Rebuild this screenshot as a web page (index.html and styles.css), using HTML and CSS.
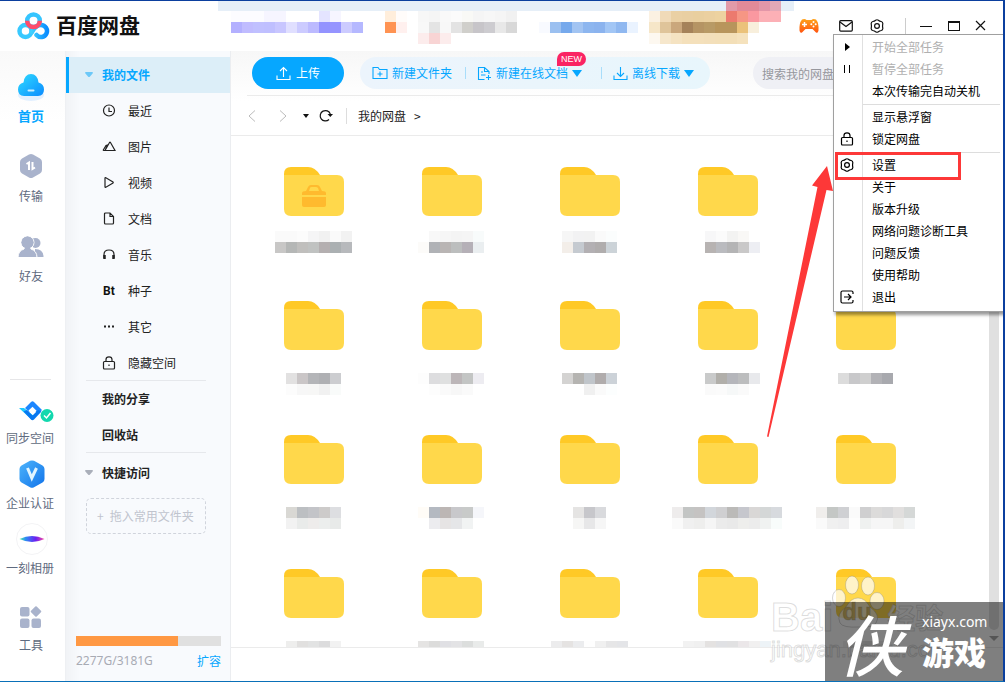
FILE: index.html
```html
<!DOCTYPE html>
<html lang="zh-CN">
<head>
<meta charset="utf-8">
<title>百度网盘</title>
<link rel="stylesheet" href="styles.css">
</head>
<body>
<svg width="0" height="0" class="defs" aria-hidden="true">
  <defs>
    <linearGradient id="cloudFill" x1="0" y1="0" x2="1" y2="1"><stop offset="0" stop-color="#2fdcff"/><stop offset="1" stop-color="#0b8cff"/></linearGradient>
    <linearGradient id="hexFill" x1="0" y1="0" x2="1" y2="1"><stop offset="0" stop-color="#4db4fb"/><stop offset="1" stop-color="#1173ea"/></linearGradient>
    <linearGradient id="lensFill"><stop offset="0" stop-color="#4ff0a0"/><stop offset=".25" stop-color="#2d8cf5"/><stop offset=".65" stop-color="#6a1ff0"/><stop offset="1" stop-color="#ff4fa0"/></linearGradient>
    <linearGradient id="padFill" x1="0" y1="0" x2="0" y2="1"><stop offset="0" stop-color="#ffa21a"/><stop offset="1" stop-color="#ff5410"/></linearGradient>
    <linearGradient id="logoFill"><stop offset="0" stop-color="#3fd0ff"/><stop offset="1" stop-color="#0a8dff"/></linearGradient>
    <symbol id="gear" viewBox="0 0 14 14"><path d="M5.600 1.200Q7 .3 8.400 1.200Q9.500 2.200 11.200 2.500Q12.900 3 12.800 4.800Q12.300 7 12.800 9.200Q12.900 11 11.200 11.500Q9.500 11.800 8.400 12.800Q7 13.700 5.600 12.800Q4.500 11.800 2.800 11.500Q1.100 11 1.200 9.200Q1.700 7 1.200 4.800Q1.100 3 2.800 2.500Q4.500 2.200 5.600 1.200Z"/><circle cx="7" cy="7" r="2.400"/></symbol>
    <symbol id="lock" viewBox="0 0 14 14"><rect x="1.500" y="5.500" width="11" height="7.500" rx="1"/><path d="M4 5.500V3.600Q4 .8 7 .8T10 3.600V5.500M7 8.500v1.500"/></symbol>
    <symbol id="folder" viewBox="0 0 60 50"><path fill="#ffc926" d="M0 12V7Q0 0 7 0H24Q31 0 36 8L42 20H0Z"/><path fill="#ffd84b" d="M0 8H53Q60 8 60 15V42Q60 49 53 49H7Q0 49 0 42Z"/></symbol>
  </defs>
</svg>

<div class="window">
  <header class="header">
    <a class="logo" href="#">
      <svg width="34" height="28" viewBox="0 0 34 28" fill="none" stroke-width="4.500"><circle cx="9.500" cy="19" r="6" stroke="#38c9ff"/><path d="M16 20Q19.500 13 25 13A6 6 0 1 1 20.500 23" stroke="url(#logoFill)" stroke-linecap="round"/><circle cx="17.500" cy="8.800" r="6.300" stroke="#35c5ff"/><path d="M11.200 8.800A6.300 6.300 0 0 0 23.800 8.800" stroke="#ff4c6b"/></svg>
      <span>百度网盘</span>
    </a>
    <svg class="notice" width="576" height="44" viewBox="218 0 576 44" shape-rendering="crispEdges" aria-hidden="true">
      <rect x="218" width="576" height="11" fill="#e6eff8"/>
      <g id="notice-cells"></g>
    </svg>
    <div class="window-tools">
      <button class="icon-btn pad" aria-label="游戏"><svg width="20" height="16" viewBox="0 0 20 16"><path fill="url(#padFill)" d="M3 1.500Q6 .5 7.500 2H12.500Q14 .5 17 1.500Q20 5 19.500 12.500Q19 15.500 17 14.500L13.500 11H6.500L3 14.500Q1 15.500.5 12.500Q0 5 3 1.500Z"/><path stroke="#fff" stroke-width="1.500" d="M5.500 4V9M3 6.500H8"/><g fill="#fff"><circle cx="14.500" cy="4" r="1"/><circle cx="14.500" cy="8.500" r="1"/><circle cx="12.300" cy="6.300" r="1"/><circle cx="16.700" cy="6.300" r="1"/></g></svg></button>
      <button class="icon-btn mail" aria-label="消息"><svg width="14" height="12" viewBox="0 0 14 12"><rect x=".7" y=".7" width="12.600" height="10.400" rx="1"/><path d="M1 2L7 6.500L13 2"/></svg></button>
      <button class="icon-btn gear" aria-label="菜单"><svg width="14" height="14"><use href="#gear"/></svg></button>
      <span class="tool-line"></span>
      <button class="icon-btn min" aria-label="最小化"><svg width="12" height="12" viewBox="0 0 12 12" shape-rendering="crispEdges"><path d="M0 6.500H12"/></svg></button>
      <button class="icon-btn max" aria-label="最大化"><svg width="12" height="10" viewBox="0 0 12 10" shape-rendering="crispEdges"><path d="M.5 1V9.500H11.500V1"/><path stroke-width="2" d="M0 1H12"/></svg></button>
      <button class="icon-btn close" aria-label="关闭"><svg width="11" height="11" viewBox="0 0 11 11"><path d="M1 1L10 10M10 1L1 10"/></svg></button>
    </div>
  </header>

  <div class="body">
    <nav class="rail" aria-label="主导航">
      <a class="rail-item current" href="#"><svg width="34" height="38" viewBox="0 0 34 38"><ellipse cx="17" cy="27" rx="13" ry="6" fill="#e2f0ff"/><path fill="url(#cloudFill)" d="M10 28Q4 27.500 4 21.500Q4 16 9.500 14.500Q10.500 6 17 6T24.500 14.500Q30 16 30 21.500Q30 27.500 24 28Z"/><path stroke="#c8eeff" stroke-width="2" stroke-linecap="round" d="M14.500 22.500H19.500"/></svg><span>首页</span></a>
      <a class="rail-item" href="#"><svg width="24" height="26" viewBox="0 0 24 26"><path fill="#a9b3cc" d="M10 1.600Q12 .4 14 1.600L21 5.500Q23 6.600 23 9V17Q23 19.400 21 20.500L14 24.400Q12 25.600 10 24.400L3 20.500Q1 19.400 1 17V9Q1 6.600 3 5.500Z"/><path fill="none" stroke="#fff" stroke-width="2" d="M7.500 11L10 9.500V17M13.500 9V16L16 14.500"/></svg><span>传输</span></a>
      <a class="rail-item" href="#"><svg width="26" height="26" viewBox="0 -2 26 26" fill="#a9b3cc"><circle cx="17.500" cy="8" r="5"/><path d="M17 14Q25.500 14 25.500 22H17Z"/><circle cx="9.500" cy="7.500" r="6.500" stroke="#fff"/><path stroke="#fff" d="M0 22.500Q0 16 6 14Q6.500 12.500 6.500 12H12.500Q12.500 12.500 13 14Q19 16 19 22.500Z"/><circle cx="9.500" cy="7.500" r="6"/></svg><span>好友</span></a>
      <div class="rail-extra">
        <a class="rail-item sync" href="#"><svg width="36" height="26" viewBox="0 0 36 26"><path fill="#1cc8ff" d="M1 9H6L16 17L14 21Z"/><path fill="#1c86ff" d="M7 9L13 3Q14.500 1.500 16 3L24 11L20 15L14.500 9.500L11 13Z"/><path fill="#0878f0" d="M9 11L14.500 16.500L20 11L23.500 12.500L16 20.500Q14.500 22 13 20.500L5.500 12.500Z"/><path fill="#fff" d="M10.500 11.500L14.500 7.800L18.500 11.800L14.500 15.800Z"/><circle cx="29" cy="16.500" r="6.500" fill="#12d8ae"/><path stroke="#fff" stroke-width="1.500" fill="none" d="M26 16.500L28.500 19L32.500 14"/></svg><span>同步空间</span></a>
        <a class="rail-item auth" href="#"><svg width="26" height="28" viewBox="0 0 26 28"><path fill="url(#hexFill)" d="M11 .8Q13 0 15 .8L23.500 5.500Q25.500 6.500 25.500 9V19Q25.500 21.500 23.500 22.500L15 27.200Q13 28.200 11 27.200L2.500 22.500Q.5 21.500.5 19V9Q.5 6.500 2.500 5.500Z"/><path fill="none" stroke="#e0f4ff" stroke-width="3" d="M8.500 8L12.800 18L17.500 8"/></svg><span>企业认证</span></a>
        <a class="rail-item album" href="#"><svg width="32" height="32" viewBox="0 0 32 32"><circle cx="16" cy="16" r="15.500" fill="#fff" stroke="#f3f3f5"/><path fill="url(#lensFill)" d="M3.500 16Q16 10 28.500 16Q16 22 3.500 16Z"/></svg><span>一刻相册</span></a>
        <a class="rail-item last" href="#"><svg width="22" height="22" viewBox="0 0 22 22" fill="#a9b3cc"><rect y="1" width="9.500" height="9.500" rx="2"/><rect y="12.500" width="9.500" height="9.500" rx="2"/><rect x="11.500" y="12.500" width="9.500" height="9.500" rx="2"/><rect x="12" y="1.500" width="8" height="8" rx="1" transform="rotate(45 16 5.500)"/></svg><span>工具</span></a>
      </div>
    </nav>

    <aside class="side">
      <a class="side-item root active" href="#"><svg class="caret" width="8" height="6" viewBox="0 0 8 6"><path fill="#6cc8f8" d="M0 1Q0 0 1 0H7Q8 0 8 1L5 4.500Q4 5.500 3 4.500Z"/></svg><b>我的文件</b><svg class="more" width="3" height="12" viewBox="0 0 3 12" fill="#7fcdf8"><path d="M0 0H2V2H0ZM0 4.500H2V6.500H0ZM0 9H2V11H0Z"/></svg></a>
      <a class="side-item" href="#"><svg width="14" height="14"><circle cx="7" cy="6.500" r="5.500"/><path d="M7 3.500V7.500H10"/></svg>最近</a>
      <a class="side-item" href="#"><svg width="14" height="14"><path d="M1 10.500L4 5.500L5.500 5L3 10.500M3 10.500L7.500 2.500Q8 2 8.500 2.500L13 10.500ZM1 10.500H4"/></svg>图片</a>
      <a class="side-item" href="#"><svg width="14" height="14"><path d="M3.500 1.500Q3 1.500 3 2V11Q3 11.500 3.500 11.500L11 7Q11.500 6.500 11 6Z"/></svg>视频</a>
      <a class="side-item" href="#"><svg width="14" height="14"><path d="M8 1H3.500Q2.500 1 2.500 2V11Q2.500 12 3.500 12H10.500Q11.500 12 11.500 11V4.500ZM8 1V4.500H11.500"/></svg>文档</a>
      <a class="side-item" href="#"><svg width="14" height="14"><path d="M2 10V6.500Q2 2 7 2T12 6.500V10"/><path stroke-width="2.500" d="M2.500 7V11M11.500 7V11"/></svg>音乐</a>
      <a class="side-item" href="#"><b class="bt">Bt</b>种子</a>
      <a class="side-item" href="#"><svg width="14" height="14"><path stroke-width="2" d="M2 6.500H4M6 6.500H8M10 6.500H12"/></svg>其它</a>
      <a class="side-item" href="#"><svg width="14" height="14"><use href="#lock"/></svg>隐藏空间</a>
      <a class="side-item root ruled" href="#"><b>我的分享</b></a>
      <a class="side-item root" href="#"><b>回收站</b></a>
      <a class="side-item root quick ruled" href="#"><svg class="caret" width="8" height="6" viewBox="0 0 8 6"><path fill="#aaafba" d="M0 1Q0 0 1 0H7Q8 0 8 1L5 4.500Q4 5.500 3 4.500Z"/></svg><b>快捷访问</b></a>
      <div class="drop"><span>+</span>拖入常用文件夹</div>
      <div class="quota">
        <div class="quota-bar"><span style="width:70.400%"></span></div>
        <div class="quota-row"><span>2277G/3181G</span><a href="#">扩容</a></div>
      </div>
    </aside>

    <main class="main">
      <div class="toolbar">
        <button class="upload"><svg width="15" height="15" viewBox="0 0 15 15"><path d="M7.500 11V1.500M4 5L7.500 1.500L11 5M1 9.500V13.500H14V9.500"/></svg>上传</button>
        <div class="pill">
          <button><svg width="16" height="14" viewBox="0 0 16 14"><path d="M1 12.500V1.500H6L7.500 3.500H15V12.500ZM8 5.500V10.500M5.500 8H10.500"/></svg>新建文件夹</button>
          <button><svg width="15" height="15" viewBox="0 0 15 15"><path d="M7.500 13.500H1.500V1.500H7.500L12 5.500V8M7.500 1.500V5.500H12M4 6H6M4 9H8.500M11.500 9V14M9 11.500H14"/></svg>新建在线文档<i class="down"></i><em class="new">NEW</em></button>
          <button><svg width="15" height="15" viewBox="0 0 15 15"><path d="M7.500 1V10.500M4 7L7.500 10.500L11 7M1 9.500V13.500H14V9.500"/></svg>离线下载<i class="down"></i></button>
        </div>
        <input class="search" type="text" placeholder="搜索我的网盘文件" aria-label="搜索我的网盘文件">
      </div>
      <div class="crumbs">
        <button aria-label="后退"><svg width="8" height="12" viewBox="0 0 8 12" stroke="#bbb"><path d="M7 .5L1 6L7 11.500"/></svg></button>
        <button aria-label="前进"><svg width="8" height="12" viewBox="0 0 8 12" stroke="#bbb"><path d="M1 .5L7 6L1 11.500"/></svg></button>
        <button aria-label="历史"><svg width="6" height="4" viewBox="0 0 6 4"><path fill="#111" d="M0 0H6L3 4Z"/></svg></button>
        <button aria-label="刷新"><svg width="14" height="13" viewBox="0 0 14 13" stroke="#111" stroke-width="1.200"><path d="M10 10.500A5.200 5.200 0 1 1 11.300 5"/><path fill="#111" stroke="none" d="M8.500 5H14L11.300 8Z"/></svg></button>
        <a href="#">我的网盘</a><span>&gt;</span>
      </div>
      <div class="files">
        <div class="grid" id="grid"></div>
        <div class="scroll"><span class="thumb"></span><i></i></div>
      </div>
      <footer class="status"></footer>
    </main>
  </div>

  <ul class="menu">
    <li><button disabled><span class="ico"><svg width="14" height="14"><path fill="#000" stroke="none" d="M5 3L10 7L5 11Z"/></svg></span>开始全部任务</button></li>
    <li><button disabled><span class="ico"><svg width="14" height="14" shape-rendering="crispEdges"><path d="M4.500 3V11M9.500 3V11"/></svg></span>暂停全部任务</button></li>
    <li><button><span class="ico"></span>本次传输完自动关机</button></li>
    <li class="sep"><button><span class="ico"></span>显示悬浮窗</button></li>
    <li><button><span class="ico"><svg width="14" height="14"><use href="#lock"/></svg></span>锁定网盘</button></li>
    <li class="sep"><button><span class="ico"><svg width="14" height="14"><use href="#gear"/></svg></span>设置</button></li>
    <li><button><span class="ico"></span>关于</button></li>
    <li><button><span class="ico"></span>版本升级</button></li>
    <li><button><span class="ico"></span>网络问题诊断工具</button></li>
    <li><button><span class="ico"></span>问题反馈</button></li>
    <li><button><span class="ico"></span>使用帮助</button></li>
    <li><button><span class="ico"><svg width="14" height="14"><path d="M13 4V2.500Q13 1 11.500 1H2.500Q1 1 1 2.500V11.500Q1 13 2.500 13H11.500Q13 13 13 11.500V10M4 7H11M8 4L11 7L8 10"/></svg></span>退出</button></li>
  </ul>

  <svg class="arrow" width="70" height="274" viewBox="765 164 70 274" aria-hidden="true"><path fill="#fd3838" d="M827 166L812 185.500L817.500 187L767 436.500L768.500 437L826.500 190L833 191Z"/></svg>
  <div class="mark"></div>

  <div class="paw-mark" aria-hidden="true">
    <div class="paw-row"><span>Bai</span><div class="paw"><svg width="56" height="62" viewBox="0 0 56 62" fill="#fff" fill-opacity=".7" stroke="#888" stroke-opacity=".35"><ellipse cx="8" cy="32" rx="6.500" ry="8.500"/><ellipse cx="21" cy="19" rx="6.500" ry="9"/><ellipse cx="37" cy="20" rx="6.500" ry="9"/><ellipse cx="46" cy="35" rx="7" ry="8.500"/><path d="M27 32Q34 32 39 41Q50 49 45 57Q41 62 28 61Q12 62 9 57Q5 48 15 41Q20 32 27 32Z"/></svg><b>du</b></div><span class="jy">经验</span></div>
    <div class="paw-url">jingyan.baidu.com</div>
  </div>
  <div class="stamp"><span class="stamp-big">侠</span><div><span class="stamp-url">xiayx.com</span><b>游戏</b></div></div>
</div>
<script src="script.js"></script>
</body>
</html>
```
FILE: styles.css
```css
* { box-sizing: border-box; }
body { margin: 0; font: 12px/20px "Noto Sans CJK SC", sans-serif; color: #222; background: #fff; }
a { color: inherit; text-decoration: none; }
button { font: inherit; color: inherit; background: none; border: 0; padding: 0; white-space: nowrap; }
svg { display: block; flex: none; }
.defs { position: absolute; }

.window { position: relative; display: flex; flex-direction: column; height: 100vh; min-height: 640px; overflow: hidden; border: solid #0b3f9e; border-width: 1px 2px 1px 0; border-bottom-color: #0a70b8; }

/* header */
.header { display: flex; align-items: flex-start; height: 50px; flex: none; }
.logo { display: flex; align-items: center; width: 218px; height: 50px; padding-left: 16px; gap: 6px; font-size: 21px; font-weight: 700; color: #111; }
.logo span { padding-bottom: 4px; }
.notice { margin-top: -1px; }
.window-tools { display: flex; align-items: center; flex: 1; height: 49px; padding-left: 5px; }
.icon-btn svg { fill: none; stroke: #111; stroke-width: 1.2; }
.pad svg { stroke: none; }
.mail { margin-left: 20px; }
.gear { margin-left: 17px; }
.tool-line { width: 1px; height: 16px; margin-left: 21px; background: #ccc; }
.min { margin-left: 14px; }
.max { margin-left: 16px; }
.close { margin-left: 15px; }

.body { display: flex; flex: 1; min-height: 0; }

/* left rail */
.rail { display: flex; flex-direction: column; width: 65px; flex: none; padding-top: 15px; background: linear-gradient(#f9f9f9, #fff 70px); color: #5f6b80; }
.rail-item { display: flex; flex-direction: column; align-items: center; width: 62px; height: 80px; line-height: 20px; }
.rail-item span { margin-top: auto; margin-bottom: 20px; }
.rail-item svg { margin-top: 7px; }
.rail-item.current { color: #06a7ff; font-size: 13px; font-weight: 700; }
.rail-item.current svg { margin-top: 2px; }
.rail-extra { margin-top: auto; padding-bottom: 26px; }
.rail-extra::before { content: ""; display: block; width: 41px; margin: 0 0 17px 10px; border-top: 1px solid #e6e6e8; }
.rail-extra .rail-item { height: 65px; width: 60px; }
.rail-extra .rail-item span { margin-bottom: 0; }
.rail-extra .sync { height: 51px; }
.rail-extra .sync svg { margin: 2px 0 0 12px; }
.rail-extra .auth svg { margin: 12px 0 0 4px; }
.rail-extra .album svg { margin: 10px 0 0 4px; }
.rail-extra .last { height: 77px; width: 62px; }
.rail-extra .last svg { margin-top: 28px; }

/* side list */
.side { display: flex; flex-direction: column; width: 166px; flex: none; padding: 6px 0 10px; border-left: 1px solid #eef0f3; border-right: 1px solid #ebedf0; background: linear-gradient(90deg, #f1f3f6, #f8fafd 14px); }
.side-item { display: flex; align-items: center; height: 36px; flex: none; padding-left: 36px; gap: 12px; }
.side-item svg { fill: none; stroke: #222; stroke-width: 1.2; }
.side-item .caret, .side-item .more { stroke: none; }
.side-item .more { margin: 0 29px 0 auto; }
.root { position: relative; }
.root .caret { margin: 0 -3px 0 -17px; }
.active { color: #06a7ff; background: #dceef8; border-left: 3px solid #06a7ff; padding-left: 33px; }
.bt { width: 14px; padding-left: 1px; font-family: Roboto, sans-serif; font-size: 12px; color: #111; }
.ruled::before { content: ""; position: absolute; top: -1px; left: 20px; width: 120px; border-top: 1px solid #e6e8ec; }
.quick { margin-top: 2px; }
.quick::before { top: -3px; }
.drop { width: 120px; height: 36px; flex: none; margin: 7px 0 0 20px; padding-left: 10px; border: 1px dashed #d0d4dc; border-radius: 5px; line-height: 34px; color: #c0c4ce; white-space: nowrap; }
.drop span { margin-right: 6px; }
.quota { margin: auto 9px 0 10px; }
.quota-bar { height: 10px; background: #e0e0e0; }
.quota-bar span { display: block; height: 10px; background: #ff9843; }
.quota-row { display: flex; justify-content: space-between; margin-top: 5px; color: #a8abb4; }
.quota-row span { font-family: "Noto Sans", sans-serif; }
.quota-row a { color: #06a7ff; }

/* main pane */
.main { display: flex; flex-direction: column; flex: 1; min-width: 0; background: linear-gradient(#f7f7f7, #fff 50px); }
.toolbar { display: flex; align-items: center; height: 45px; flex: none; margin-left: 16px; padding-left: 5px; border-bottom: 1px solid #ebebeb; }
.toolbar svg { fill: none; stroke: currentColor; stroke-width: 1.1; }
.upload { display: flex; align-items: center; justify-content: center; gap: 5px; width: 92px; height: 32px; flex: none; border-radius: 16px; background: #06a7ff; color: #fff; }
.pill { display: flex; align-items: center; width: 350px; height: 32px; flex: none; margin-left: 16px; padding-left: 12px; border-radius: 16px; background: linear-gradient(90deg, #ecf4fc, #e8f6fc); color: #06a7ff; }
.pill button { position: relative; display: flex; align-items: center; gap: 4px; }
.pill button + button { margin-left: 13px; padding-left: 12px; }
.pill button + button::before { content: ""; position: absolute; left: 0; width: 1px; height: 12px; background: #a8ddfa; }
.pill button:last-child { margin-left: 19px; }
.down { border: 5px solid transparent; border-top: 7px solid #06a7ff; border-bottom: 0; }
.new { position: absolute; right: -4px; top: -11px; padding: 0 4px; border-radius: 7px 7px 7px 0; background: #fa2463; color: #fff; font: 9px/14px "Liberation Sans", sans-serif; }
.search { flex: 1; min-width: 80px; height: 32px; margin: 0 14px 0 43px; padding: 0 9px; border: 0; border-radius: 16px; background: #eff0f5; font: inherit; }
.search::placeholder { color: #96979d; }
.crumbs { display: flex; align-items: center; height: 40px; flex: none; padding-left: 17px; border-bottom: 1px solid #ebebeb; }
.crumbs svg { fill: none; }
.crumbs button + button { margin-left: 23px; }
.crumbs button:nth-child(3) { margin-left: 16px; }
.crumbs button:nth-child(4) { margin-left: 10px; }
.crumbs a { margin-left: 13px; padding-left: 11px; border-left: 1px solid #ddd; line-height: 16px; }
.crumbs span { margin-left: 8px; }
.files { display: flex; flex: 1; min-height: 0; overflow: hidden; }
.grid { display: grid; flex: 1; grid-template-columns: repeat(auto-fill, 138px); grid-auto-rows: 134px; align-content: start; padding: 31px 0 0 14px; }
.file { display: flex; flex-direction: column; align-items: center; }
.cover { position: relative; }
.badge { position: absolute; left: 18px; top: 18px; }
.name { margin: 14px 2px 0 0; }
.low .name { margin-top: 22px; }
.scroll { display: flex; flex-direction: column; align-items: center; width: 10px; margin-right: 4px; }
.thumb { flex: 1; width: 10px; margin-bottom: 6px; border-radius: 0 0 5px 5px; background: #e0e0e0; }
.scroll i { margin-bottom: 6px; border: 5px solid transparent; border-top-color: #aaa; border-bottom: 0; }
.status { height: 34px; flex: none; border-top: 1px solid #ebebeb; }

/* popup menu */
.menu { position: absolute; top: 33px; right: -1px; width: 171px; margin: 0; padding: 1px 3px 3px 0; list-style: none; border: 1px solid #a0a0a0; background: linear-gradient(90deg, #fff 28px, #e0e0e0 28px, #e0e0e0 29px, #fff 29px); box-shadow: 2px 3px 3px rgba(0,0,0,.4); color: #000; }
.menu button { display: flex; align-items: center; width: 100%; height: 22px; }
.menu button:disabled { color: #b0b0b0; }
.ico { width: 30px; margin-right: 8px; padding-left: 6px; }
.ico svg { fill: none; stroke: #000; stroke-width: 1.2; }
.sep { padding-top: 4px; background: linear-gradient(#ddd, #ddd) 29px 2px / 100% 1px no-repeat; }

/* annotations and stamps lying over the window */
.arrow { position: absolute; left: 765px; top: 163px; }
.mark { position: absolute; right: 42px; top: 151px; width: 126px; height: 28px; border: 3px solid #fd3838; }
.paw-mark { position: absolute; right: 50px; bottom: 18px; width: 182px; color: rgba(255,255,255,.8); -webkit-text-stroke: 1px rgba(120,120,120,.25); }
.paw-row { display: flex; align-items: flex-end; height: 74px; font: 700 40px/40px "Liberation Sans", sans-serif; }
.paw { position: relative; padding-bottom: 9px; margin-left: -2px; }
.paw b { position: absolute; left: 11px; bottom: 12px; font-size: 24px; line-height: 26px; color: rgba(200,160,40,.6); }
.paw-row .jy { font: 700 28px/40px "Noto Sans CJK SC", sans-serif; white-space: nowrap; }
.paw-url { font: 22px/26px "Liberation Sans", sans-serif; }
.stamp { position: absolute; right: -2px; bottom: -1px; display: flex; align-items: center; width: 180px; height: 80px; padding-left: 13px; background: rgba(0,0,0,.5); color: #fff; }
.stamp-big { width: 84px; font: italic 500 66px/80px "Noto Sans CJK SC", sans-serif; }
.stamp div { display: flex; flex-direction: column; }
.stamp-url { font: 14px/18px "Noto Sans", sans-serif; }
.stamp b { font-size: 32px; line-height: 40px; font-weight: 900; }
```
FILE: script.js
```js
const CELL = 11;

function cells(x, y, list) {
  return list.split(" ").map((c, i) =>
    c === "-" ? "" : `<rect x="${x + i * CELL}" y="${y}" width="${CELL}" height="${CELL}" fill="#${c}"/>`
  ).join("");
}

document.getElementById("notice-cells").innerHTML = [
  [231, 11, "fcfcff fcfcff fcfcff f6f5ff f6f5ff - - - e4e4ff f6f5ff"],
  [231, 22, "b3b0ff c0bcff c0c0ff bfbfff c8c6ff e0dfff cccbff bcbaff 9393ff 9594ff cccbff b5b8ff"],
  [385, 11, "ffeedb fffcfa"],
  [385, 22, "ff9352 fff0ee"],
  [418, 11, "f7f7f7 f5f5f5 f9f9f9 fbfbfb f9f9f6 f5f5f5 f7f7f7 f5f5f5 f1f1f1"],
  [418, 22, "f8f8f8 e4e4e4 f8f8f8 e3e3e3 d0cfcb c7c5c9 cdccd0 e8e8e8 d8d8d8"],
  [418, 33, "fcecec f8d4d4 fcecec"],
  [539, 22, "f8faff 9bc0f0 76a9ec a2c4f2 8db6ef 8bb3ee a2c6f5 90b8f0 eaf3ff"],
  [649, 11, "fbf1e2 f0dab8 ead0a4 e9cfa2 e9cf9f ebd0a0 edd2a0 ec7a6e f69684 fa98a0 fcb0b6 fcb0b6"],
  [649, 22, "f6e6c8 dfc49a caa77c a5825a b59464 b89a66 b8955c b8955c ebc27a f8efdc"],
  [649, 33, "fdf8f0 f6e7cc f5e3c2 f4e0bb f4e0bb f3dfba f3dfb8 f3dfb8 f5e2bd"],
  [726, 0, "e29aa8 e28a98 e28a98 e296a8 e2a8b6"]
].map(r => cells(...r)).join("");

const names = [
  ["fafafa fafafa fcfcfc f5f5f6 f1f1f1 fafafa f2f2f2|c8c7c6 b5b7b6 c0bfbd c0c2c1 b4afb0 abb0b2 b7b9bc", "- f8f8f8 f6f6f6 f4f4f4 f5f5f5 f8fbfb|fcfbf9 b0b2b6 b9b5b4 bcbebe b5b0b7 eaeef0", "f6f6f6 f2f2f3 f2f2f2 fafafa fbfdfd|f3eee9 c5cad0 b3b0b3 b0adad ccd3d8", "- f7f7f8 fbfbfb f3f3f2 f9f8f6 -|- b7b3b2 babbbf b4b4b5 c9c8c8 edeef3", ""],
  ["e2e1e1 cac6c7 b4b5b8 afb0b3 cccdd0|fcfcfc f7f7f7 f7f7f6 f1f1f1 f9fbfa", "fdfdfd dddddf dfe0e0 bcb6b8 c3c5c4 edecf1|- fdfdfd fafafa f7f7f7 fafafa -", "d4d3d2 b5b4b1 c0c5ca b0acac ccd2d8|- - f0f0f0 fafafa fcfefe", "- c9caca b1afaa b5b6bb bcbdbe e8e9ec|- fafafa fbfbfb f6f8f8 fafafa -", "dcdcdc c8c8ca cfcfcf b2b2b6 a8a9ae"],
  ["d9d8d4 bcbfc2 c3c4c8 cdcbca dddee1|f2f2f2 e9ebea eeeceb eceeed e8eae9", "fffcf7 b4b9c1 bcb6b4 c8c8cb c8cac9 f5f6fa|- ececef e6e4e4 e5e6e8 f1f3f3 -", "e5e4e3 c7c7cb d9dadd|f6f6f5 e7e7e8 f6f6f6", "eeecec c3c5c4 c5c3c2 d2d6db cfcfd1 bbbab8 c6c7cd d9d7d6 d4d7d7 d7dade|fafafa f0f0f0 eeeeed f5f5f5 ebebeb e9e9e9 eeeeec ececec f0f2f1 f8fcfb", "f0eeec c4c7c5 cfd0d3 fafafa cfcfd0 dcdbda d8d8d9 e1dfde d5d8d7|fafafa f0f0f0 eeeeef fdfdfd eff1f0 f6f6f6 f6f6f6 eeeeec f3f5f6"],
  ["eeeeed e1e0df e2e3e3 dcdcdd f2f2f2", "e5e4e3 dcdcdb e0e0e4 e3e3e5 dcdedd e9ebea", "ececed e5e3e2 ebecee fefefe f0f0f0 e6e6e7 e4e5e8", "f2f2f2 f0f0f0 e4e2e1 e0e1e4 e1e1e2 ebe7e9 f1f0f0 edf3f7", "f2f2f2 e6e6e6 e2e2e2 eeeeee"]
];

const briefcase = '<svg class="badge" width="24" height="22" viewBox="0 0 24 22" fill="#ffba2e"><path fill-rule="evenodd" d="M4 6L6 2Q7 0 9 0H15Q17 0 18 2L20 6Q24 6 24 8V10H0V8Q0 6 4 6ZM7 6H17L16 3Q15 2 14 2H10Q8 2 8 3Z"/><path d="M0 12H24V20Q24 22 22 22H2Q0 22 0 20Z"/></svg>';

document.getElementById("grid").innerHTML = names.map((row, r) => row.map((name, c) => {
  const lines = name.split("|");
  const width = Math.max(...lines.map(l => l.split(" ").length)) * CELL;
  const mosaic = lines.map((l, i) => cells(0, i * CELL, l || "-")).join("");
  return `<div class="file${r ? " low" : ""}"><div class="cover"><svg width="60" height="50"><use href="#folder"/></svg>${r + c ? "" : briefcase}</div>` +
    `<svg class="name" width="${width}" height="22" shape-rendering="crispEdges">${mosaic}</svg></div>`;
}).join("")).join("");
```
